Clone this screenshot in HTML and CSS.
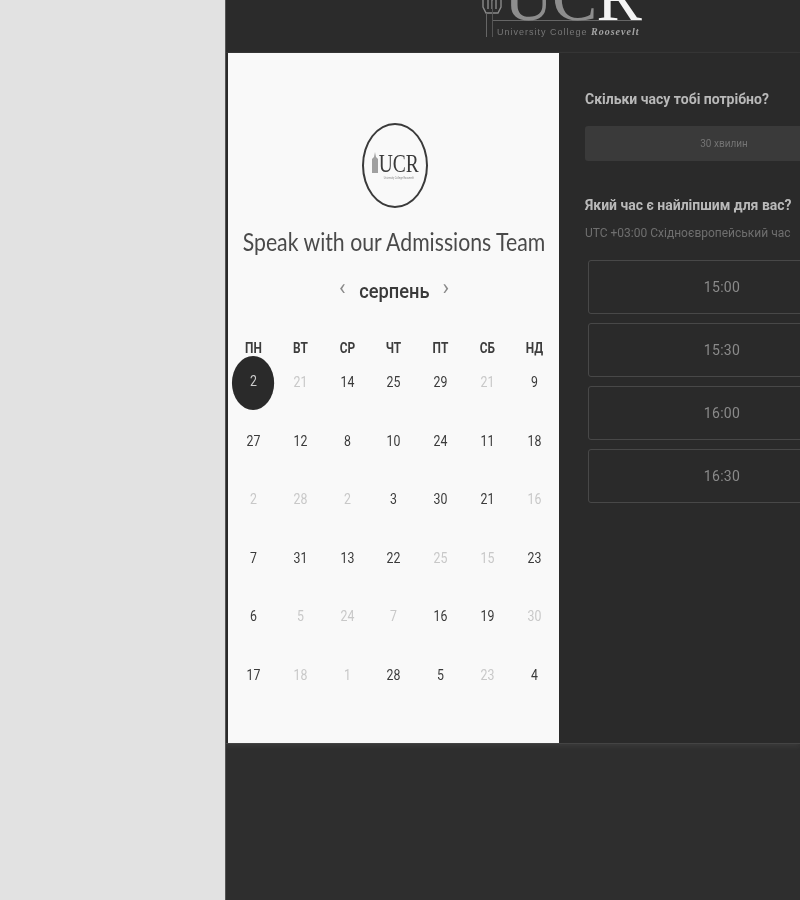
FILE: index.html
```html
<!DOCTYPE html>
<html lang="uk">
<head>
<meta charset="utf-8">
<title>Speak with our Admissions Team</title>
<link rel="stylesheet" href="styles.css">
</head>
<body>
<div class="side"></div>
<main class="page">
  <header class="top">
    <div class="brand">
      <svg class="tower" width="22" height="38" viewBox="0 0 22 38" aria-hidden="true"><path d="M2 0v8l3 6h12l3-6V0M7 0v10M11 0v10M15 0v10" fill="none" stroke="#8a8a8a" stroke-width="1.4"/><path d="M5.500 14V38" stroke="#666" stroke-width="1"/></svg>
      <div class="brand-text">
        <div class="brand-big"><span class="uc">UC</span><span class="r">R</span></div>
        <div class="brand-sub">University College <em>Roosevelt</em></div>
      </div>
    </div>
  </header>
  <div class="content">
    <section class="card">
      <div class="logo">
        <svg class="logo-tower" width="6" height="21" viewBox="0 0 6 21" aria-hidden="true"><path d="M0 21V7l2-2 1-5 1 5 2 2v14z" fill="#a0a0a0"/></svg>
        <div class="logo-text"><span class="logo-ucr">UCR</span><span class="logo-sub">University College Roosevelt</span></div>
      </div>
      <h1 class="title">Speak with our Admissions Team</h1>
      <div class="month"><span class="arrow">‹</span><span class="month-name">серпень</span><span class="arrow">›</span></div>
      <div class="cal">
        <div class="dow">ПН</div><div class="dow">ВТ</div><div class="dow">СР</div><div class="dow">ЧТ</div><div class="dow">ПТ</div><div class="dow">СБ</div><div class="dow">НД</div>
      </div>
      <div class="cal days">
        <div class="day sel"><span>2</span></div><div class="day off">21</div><div class="day">14</div><div class="day">25</div><div class="day">29</div><div class="day off">21</div><div class="day">9</div>
        <div class="day">27</div><div class="day">12</div><div class="day">8</div><div class="day">10</div><div class="day">24</div><div class="day">11</div><div class="day">18</div>
        <div class="day off">2</div><div class="day off">28</div><div class="day off">2</div><div class="day">3</div><div class="day">30</div><div class="day">21</div><div class="day off">16</div>
        <div class="day">7</div><div class="day">31</div><div class="day">13</div><div class="day">22</div><div class="day off">25</div><div class="day off">15</div><div class="day">23</div>
        <div class="day">6</div><div class="day off">5</div><div class="day off">24</div><div class="day off">7</div><div class="day">16</div><div class="day">19</div><div class="day off">30</div>
        <div class="day">17</div><div class="day off">18</div><div class="day off">1</div><div class="day">28</div><div class="day">5</div><div class="day off">23</div><div class="day">4</div>
      </div>
    </section>
    <section class="panel">
      <h2 class="q">Скільки часу тобі потрібно?</h2>
      <div class="duration">30 хвилин</div>
      <h2 class="q q2">Який час є найліпшим для вас?</h2>
      <p class="tz">UTC +03:00 Східноєвропейський час</p>
      <div class="slots">
        <div class="slot">15:00</div>
        <div class="slot">15:30</div>
        <div class="slot">16:00</div>
        <div class="slot">16:30</div>
      </div>
    </section>
  </div>
</main>
</body>
</html>
```

FILE: styles.css
```css
* { box-sizing: border-box; }
html, body { margin: 0; height: 100%; }
body {
  display: flex;
  width: 800px;
  height: 900px;
  overflow: hidden;
  background: #e2e2e2;
  font-family: Roboto, "Liberation Sans", sans-serif;
}
.side { flex: 0 0 225px; background: #e2e2e2; }
.page {
  flex: 0 0 575px;
  width: 575px;
  overflow: hidden;
  background: #2e2e2e;
  border-left: 1px solid #555;
  height: 900px;
  filter: blur(0.4px);
}
.top {
  height: 53px;
  display: flex;
  align-items: flex-end;
  padding-left: 257px;
  background: #2b2b2b;
  border-bottom: 1px solid #333;
  overflow: hidden;
}
.brand { display: flex; align-items: flex-end; margin-bottom: 15px; }
.tower { margin-right: 3px; margin-left: -2px; }
.brand-text { border-left: 1px solid #555; margin-left: -14px; }
.brand-big {
  font-family: "Liberation Serif", serif;
  font-size: 68px;
  line-height: 46px;
  height: 20px;
  display: flex;
  align-items: flex-end;
  padding-left: 11px;
  border-bottom: 1px solid #666;
}
.uc { color: #8d8d8d; letter-spacing: -1px; }
.r { color: #f4f4f4; }
.brand-sub {
  font-family: "Liberation Sans", sans-serif;
  font-size: 9px;
  color: #777;
  letter-spacing: 1px;
  padding: 5px 0 0 4px;
  white-space: nowrap;
}
.brand-sub em {
  font-family: "Liberation Serif", serif;
  font-weight: bold;
  color: #a5a5a5;
  font-size: 10px;
}
.content {
  display: flex;
  height: 691px;
  border-bottom: 1px solid #444;
  background: #2a2a2a;
  padding-left: 2px;
  box-shadow: 0 2px 6px rgba(255, 255, 255, 0.07);
}
.card {
  flex: 0 0 331px;
  width: 331px;
  min-width: 0;
  background: #f9f9f9;
  padding: 70px 1px 0 2px;
  display: flex;
  flex-direction: column;
}
.logo {
  width: 66px;
  height: 85px;
  margin: 0 auto;
  border: 2px solid #3a3a3a;
  border-radius: 50%;
  display: flex;
  align-items: center;
  justify-content: center;
  gap: 1px;
  position: relative;
  left: 1px;
}
.logo-tower { margin-bottom: 7px; }
.logo-text { width: 40px; display: flex; flex-direction: column; align-items: center; }
.logo-ucr {
  font-family: "Liberation Serif", serif;
  font-size: 26px;
  line-height: 24px;
  color: #3a3a3a;
  transform: scaleX(0.75);
}
.logo-sub { font-size: 3px; color: #888; white-space: nowrap; line-height: 4px; transform: scaleX(0.8); }
.title {
  margin: 17px 0 0;
  font-family: Lato, sans-serif;
  font-weight: 400;
  font-size: 25px;
  line-height: 33px;
  text-align: center;
  color: #4a4a4a;
  white-space: nowrap;
  transform: scaleX(0.85);
  display: flex;
  justify-content: center;
}
.month {
  margin-top: 18px;
  height: 30px;
  display: flex;
  justify-content: center;
  align-items: center;
  gap: 8px;
  color: #333;
}
.month-name { font-size: 21px; font-weight: 500; color: #3a3a3a; transform: scaleX(0.87); }
.arrow { font-size: 22px; color: #8a8a8a; line-height: 24px; margin-top: -6px; }
.cal {
  display: grid;
  grid-template-columns: repeat(7, 46.800px);
}
.dow {
  margin-top: 33px;
  text-align: center;
  font-size: 14px;
  font-weight: 700;
  line-height: 18px;
  color: #3d3d3d;
  transform: scaleX(0.85);
}
.days { grid-auto-rows: 58.500px; margin-top: 8px; }
.day {
  display: flex;
  align-items: center;
  justify-content: center;
  font-size: 14px;
  color: #3a3a3a;
  height: 34px;
  transform: scaleX(0.88);
}
.off { color: #c8c8c8; }
.sel { position: relative; color: #ccc; }
.sel::before {
  content: "";
  position: absolute;
  left: -1px;
  top: -9px;
  width: 48px;
  height: 54px;
  border-radius: 50%;
  background: #2a2a2a;
}
.sel span { position: relative; top: -1px; }
.panel { flex: 1; padding: 36px 0 0 26px; overflow: hidden; }
.q {
  margin: 0;
  font-size: 14px;
  font-weight: 700;
  line-height: 20px;
  color: #b9b9b9;
  white-space: nowrap;
}
.duration {
  margin-top: 17px;
  width: 278px;
  height: 35px;
  background: #3a3a3a;
  border-radius: 3px;
  display: flex;
  align-items: center;
  justify-content: center;
  font-size: 10px;
  color: #747474;
}
.q2 { margin-top: 34px; }
.tz {
  margin: 10px 0 0;
  font-size: 12px;
  line-height: 16px;
  color: #6f6f6f;
  white-space: nowrap;
}
.slots { margin: 19px 0 0 3px; display: flex; flex-direction: column; gap: 9px; width: 268px; }
.slot {
  height: 54px;
  border: 1px solid #484848;
  border-radius: 3px;
  display: flex;
  align-items: center;
  justify-content: center;
  font-size: 14px;
  letter-spacing: 0.3px;
  color: #8a8a8a;
}
```
